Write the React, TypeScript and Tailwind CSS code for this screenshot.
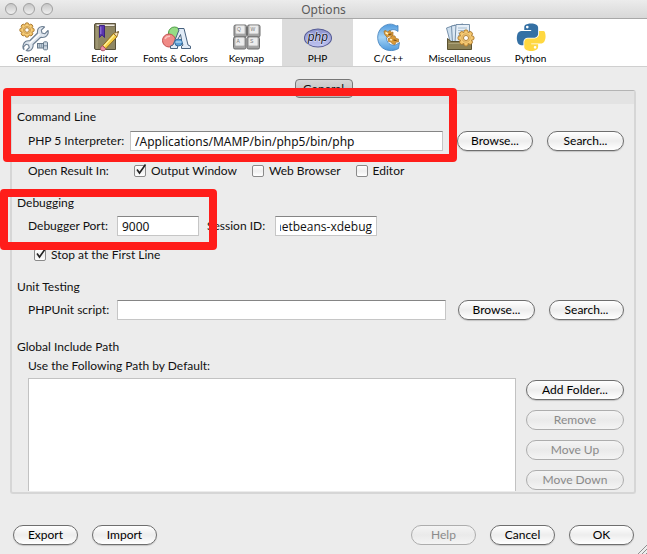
import React, { useState } from "react";
import clsx from "clsx";

const gearTeeth = [0, 45, 90, 135, 180, 225, 270, 315];

function Gear({ cx, cy, r }: { cx: number; cy: number; r: number }) {
  return (
    <g transform={`translate(${cx} ${cy})`}>
      {gearTeeth.map((a) => (
        <circle key={a} r={r * 0.3} cx={0} cy={-r * 0.8} transform={`rotate(${a})`} fill="#f3c46a" stroke="#a8762a" strokeWidth="0.9" />
      ))}
      <circle r={r * 0.78} fill="#f7cf7c" />
      <circle r={r * 0.56} fill="none" stroke="#c08a3a" strokeWidth="0.6" />
      <circle r={r * 0.34} fill="#fff" stroke="#a8762a" strokeWidth="0.9" />
    </g>
  );
}

function GeneralIcon() {
  return (
    <svg viewBox="0 0 30 30" className="size-[30px]" aria-hidden="true">
      <Gear cx={8} cy={8} r={6.6} />
      <path
        d="M5 27.500 C3 26 4 21 6.500 19.500 C8 18.600 10 19 11 18.500 L18.500 11 C18.200 8 19.500 5.500 22 4.800 C23.500 4.300 25 4.500 25.500 5 L22.300 8.200 L23 11 L25.700 11.800 L29 8.500 C29.800 11 28.500 14 26 15 C24 15.800 22.500 15.200 21.500 15.500 L14 22.500 C14.500 25 13 28 10.500 28.700 C9 29 8 29 7.200 28.600 L10.300 25.500 L9.500 23 L7 22.300 L4.500 24.800 Z"
        fill="#dfe6ee" stroke="#6d7f92" strokeWidth="1.100" strokeLinejoin="round"
      />
      <path d="M10.500 21.500 L20.500 12" stroke="#fff" strokeWidth="1.200" />
      <rect x="18.500" y="21.500" width="6.500" height="4.500" fill="#b9c7d4" stroke="#66798b" />
      <path d="M20.500 22 V26 M22.500 22 V26" stroke="#7e90a1" strokeWidth="0.700" />
      <rect x="24.500" y="19.800" width="4" height="8" rx="1" fill="#ccd7e1" stroke="#66798b" />
      <path d="M25 23.800 H28.500" stroke="#66798b" strokeWidth="0.800" />
    </svg>
  );
}

function EditorIcon() {
  return (
    <svg viewBox="0 0 30 30" className="size-[30px]" aria-hidden="true">
      <path d="M4.500 3 Q4.500 1.500 6 1.500 H25.500 V27.500 H6 Q4.500 27.500 4.500 26 Z" fill="#8f8763" stroke="#57503a" />
      <path d="M6 2 H25 V4.500 H7 Q5.500 4 6 2 Z" fill="#eeeade" stroke="#6b6046" strokeWidth="0.800" />
      <path d="M7 5.500 V27" stroke="#aca482" />
      <path d="M9.500 3.500 H14.500 V15.500 L12 12.800 L9.500 15.500 Z" fill="#5a35b0" stroke="#371c7d" strokeWidth="0.900" />
      <path d="M10.800 4.500 V12" stroke="#a48ae0" strokeWidth="0.900" />
      <path d="M12.500 23.800 L23.500 11.500 L27 14.800 L15.800 26.700 Z" fill="#f6cf45" stroke="#8b6518" strokeWidth="0.900" />
      <path d="M14 24 L24.200 13" stroke="#fdf0a0" strokeWidth="1.200" />
      <path d="M23.500 11.500 L28.500 9.500 L27 14.800 Z" fill="#f2dfb8" stroke="#8b6518" strokeWidth="0.800" />
      <path d="M27.200 10 L28.700 9.300 L28.200 11.200 Z" fill="#333" />
      <path d="M12.500 23.800 C10 25 10 28.200 12 28.700 C14 29 15.500 28 15.800 26.700 Z" fill="#ee91a4" stroke="#a04a5c" strokeWidth="0.900" />
    </svg>
  );
}

function FontsIcon() {
  return (
    <svg viewBox="0 0 30 30" className="size-[30px]" aria-hidden="true">
      <circle cx="13.500" cy="11" r="6" fill="#96dc85" stroke="#4c9c43" />
      <circle cx="8" cy="18.500" r="6.500" fill="#f08a86" stroke="#c24f50" />
      <path d="M4 17 Q5.500 14 9 14.200" stroke="#fbc5c0" strokeWidth="1.500" fill="none" />
      <path
        fillRule="evenodd"
        d="M9.500 24 L12 23 L18 8 L17 6.500 H23 L27 23 L29.500 24.200 V26.500 H20.500 V24.200 L22 23.200 L21.300 21 H15.500 L14.800 23 L16.500 24.200 V26.500 H9.500 Z M16.500 18 H20.600 L19.500 12.500 Z"
        fill="#e2ecf7" stroke="#47617e" strokeWidth="1" strokeLinejoin="round"
      />
      <ellipse cx="17.500" cy="20.500" rx="3.800" ry="3.500" fill="#5da0d8" stroke="#2d6597" strokeWidth="0.900" />
      <path d="M14.500 20 H20.500" stroke="#b9dcf4" strokeWidth="1.300" />
    </svg>
  );
}

const keys = [
  { x: 2, y: 3, c: "Q" },
  { x: 15.5, y: 3, c: "W" },
  { x: 1.5, y: 15, c: "A" },
  { x: 15, y: 15, c: "S" },
];

function KeymapIcon() {
  return (
    <svg viewBox="0 0 30 30" className="size-[30px]" aria-hidden="true">
      {keys.map((k) => (
        <g key={k.c}>
          <rect x={k.x} y={k.y} width="12.500" height="12" rx="1.500" fill="#a2a2a2" stroke="#6e6e6e" />
          <rect x={k.x + 1.8} y={k.y + 0.6} width="9" height="8.200" rx="1" fill="#ededed" stroke="#c4c4c4" strokeWidth="0.500" />
          <text x={k.x + 3} y={k.y + 6.2} fontSize="5" fontFamily="Liberation Sans, sans-serif" fill="#777">{k.c}</text>
        </g>
      ))}
    </svg>
  );
}

function PhpIcon() {
  return (
    <svg viewBox="0 0 30 30" className="size-[30px]" aria-hidden="true">
      <defs>
        <linearGradient id="phpFill" x1="0" y1="0" x2="0" y2="1">
          <stop offset="0" stopColor="#8c92cc" />
          <stop offset="1" stopColor="#c0c5f2" />
        </linearGradient>
      </defs>
      <ellipse cx="15" cy="16" rx="13.500" ry="9" fill="url(#phpFill)" stroke="#565c96" strokeWidth="1.100" />
      <text x="14.800" y="18.800" textAnchor="middle" fontSize="12" fontStyle="italic" fontFamily="Liberation Sans, sans-serif" fill="#15151f" stroke="#dfe1fa" strokeWidth="1.200" paintOrder="stroke">php</text>
    </svg>
  );
}

function CppIcon() {
  return (
    <svg viewBox="0 0 30 30" className="size-[30px]" aria-hidden="true">
      <defs>
        <linearGradient id="cFill" x1="0" y1="0" x2="0" y2="1">
          <stop offset="0" stopColor="#4f9ade" />
          <stop offset="0.500" stopColor="#a5d3f5" />
          <stop offset="1" stopColor="#4e9ade" />
        </linearGradient>
      </defs>
      <path
        d="M24 3.500 V9.500 C21 7 17.500 7 15 9.500 C11.500 12.500 11.500 18.500 15 21.500 C18 24 22 23.500 25.500 20.500 L24.500 26.500 C19 29.800 11 29.300 6.500 24 C2 18 3 9.500 8.500 5 C13.500 1.200 19 1.500 22 4 Z"
        fill="url(#cFill)" stroke="#3f7dba" strokeWidth="0.800" strokeLinejoin="round"
      />
      <g fill="#d99a38" stroke="#a8742c" strokeWidth="0.700" strokeLinejoin="round">
        <path d="M10 9 L12 8.500 L13.500 10 L16 8.500 L17.500 10.500 L19 10 L19 13 L17.500 14.500 L15 14 L13.500 15.500 L12 14 L10.500 12 Z" />
        <path d="M14 16.500 L17 15.500 L18 13.500 L21 14 L22 16.500 L24.500 17 L24.500 20 L22 20 L21 22.500 L18.500 22 L17 20 L14.500 19.500 Z" />
      </g>
      <path d="M11.500 10.500 L14 12 M16 17.500 L18 18" stroke="#fff0c4" strokeWidth="1.600" />
      <path d="M14.500 12.500 L17.500 12 M19.500 18 L22.500 18.500" stroke="#6d4310" strokeWidth="1.200" />
    </svg>
  );
}

function MiscIcon() {
  return (
    <svg viewBox="0 0 30 30" className="size-[30px]" aria-hidden="true">
      <path d="M1.500 6 L10 3 L14 20 L6 23 Z" fill="#cfe0ef" stroke="#6b86a2" strokeWidth="0.900" />
      <path d="M6.500 4 L18 2 L20 20 L7.500 21 Z" fill="#dbe8f4" stroke="#6b86a2" strokeWidth="0.900" />
      <path d="M11 2.500 H24.500 V21 H10 Z" fill="#e6eff8" stroke="#6b86a2" strokeWidth="0.900" />
      <path d="M13 6 H22 M13 8.500 H22 M13 11 H18 M13 13.500 H17" stroke="#9db5cb" strokeWidth="0.900" />
      <path d="M2.500 16.500 L6 19.500 H22 L26.500 17.500 V27.500 H2.500 Z" fill="#8d8256" stroke="#5b5231" />
      <path d="M3.500 21.500 H25.500" stroke="#afa57c" strokeWidth="0.900" />
      <Gear cx={21} cy={16} r={7.4} />
    </svg>
  );
}

function PythonIcon() {
  return (
    <svg viewBox="0 0 110 110" className="size-[30px]" aria-hidden="true">
      <g transform="translate(3 3) scale(0.95)">
        <path
          fill="#3470a4"
          d="M54.900 3 C50.300 3 46 3.400 42.100 4.100 C30.800 6.100 28.700 10.300 28.700 18 V28.200 H55.500 V31.600 H18.600 C10.800 31.600 4 36.300 1.900 45.200 C-0.600 55.400 -0.700 61.800 1.900 72.500 C3.800 80.500 8.400 86.100 16.200 86.100 H25.400 V73.900 C25.400 65 33.100 57.200 42.100 57.200 H68.900 C76.300 57.200 82.200 51.100 82.200 43.600 V18 C82.200 10.700 76.100 5.300 68.900 4.100 C64.300 3.300 59.500 3 54.900 3 Z M40.400 11.200 A5.100 5.100 0 1 1 40.400 21.500 A5.100 5.100 0 1 1 40.400 11.200 Z"
        />
        <path
          fill="#ffd840"
          d="M85.600 31.600 V43.500 C85.600 52.700 77.800 60.500 68.900 60.500 H42.100 C34.800 60.500 28.700 66.800 28.700 74.200 V93 C28.700 100.200 35 104.500 42.100 106.600 C50.600 109.100 58.800 109.600 68.900 106.600 C75.600 104.700 82.200 100.800 82.200 93 V82.800 H55.500 V79.400 H95.600 C103.400 79.400 106.300 73.900 109 65.800 C111.800 57.400 111.700 49.400 109 38.600 C107.100 30.800 103.500 31.600 95.600 31.600 Z M70.500 89.500 A5.100 5.100 0 1 1 70.500 99.700 A5.100 5.100 0 1 1 70.500 89.500 Z"
        />
      </g>
    </svg>
  );
}

const categories = [
  { name: "General", Icon: GeneralIcon },
  { name: "Editor", Icon: EditorIcon },
  { name: "Fonts & Colors", Icon: FontsIcon },
  { name: "Keymap", Icon: KeymapIcon },
  { name: "PHP", Icon: PhpIcon },
  { name: "C/C++", Icon: CppIcon },
  { name: "Miscellaneous", Icon: MiscIcon },
  { name: "Python", Icon: PythonIcon },
];

function PushButton({ children, className, disabled }: { children: React.ReactNode; className?: string; disabled?: boolean }) {
  return (
    <button
      type="button"
      disabled={disabled}
      className={clsx(
        "flex h-5 shrink-0 items-center justify-center rounded-full border bg-linear-to-b whitespace-nowrap",
        disabled
          ? "border-[#adadad] from-[#f4f4f4] via-[#eaeaea] to-[#f4f4f4] text-[#8a8a8a]"
          : "border-[#6e6e6e] from-white via-[#ededed] to-white text-black shadow-[0_1px_1px_#c4c4c4]",
        className,
      )}
    >
      {children}
    </button>
  );
}

function CheckBox({ id, label, defaultChecked }: { id: string; label: string; defaultChecked?: boolean }) {
  return (
    <div className="flex h-4 items-center gap-[5px]">
      <span className="relative flex">
        <input
          id={id}
          type="checkbox"
          defaultChecked={defaultChecked}
          className="peer size-3 appearance-none rounded-[2px] border border-[#8a8a8a] bg-linear-to-b from-white via-[#efefef] to-white"
        />
        <svg viewBox="0 0 14 14" className="pointer-events-none absolute -top-0.5 left-0 hidden size-3.5 peer-checked:block" aria-hidden="true">
          <path d="M3 6.500 L5.500 10 L11.500 1.500" fill="none" stroke="#222" strokeWidth="1.600" />
        </svg>
      </span>
      <label htmlFor={id}>{label}</label>
    </div>
  );
}

const field = "h-5 min-w-0 border border-[#c6c6c6] border-t-[#858585] bg-white px-1 outline-none";

export default function App() {
  const [active, setActive] = useState("PHP");
  return (
    <main className="flex min-h-screen flex-col bg-[#ececec] font-['Lato',sans-serif] text-[12px] leading-4 text-[#111]">
      <header className="relative flex h-[19px] items-center justify-center border-b border-[#a8a8a8] bg-linear-to-b from-[#ececec] to-[#d8d8d8]">
        <div className="absolute left-[5px] flex gap-1.5">
          {["Close", "Minimize", "Zoom"].map((n) => (
            <button key={n} type="button" aria-label={n} className="size-3 rounded-full border border-[#a0a0a0] bg-linear-to-b from-[#c6c6c6] to-[#f0f0f0]" />
          ))}
        </div>
        <h1 className="pt-0.5 font-['Noto_Sans',sans-serif] text-[#5a5a5a]">Options</h1>
      </header>

      <nav className="flex h-12 border-b border-[#cfcfcf] bg-white text-[10px] leading-3 text-black">
        {categories.map(({ name, Icon }) => (
          <button
            key={name}
            type="button"
            onClick={() => setActive(name)}
            className={clsx("-ml-0.5 mr-0.5 flex w-[71px] flex-col items-center pt-[3px] whitespace-nowrap", active === name && "bg-[#dcdcdc]")}
          >
            <Icon />
            {name}
          </button>
        ))}
      </nav>

      <div className="relative flex flex-col px-[10px] pt-3">
        <button type="button" className="relative z-10 flex h-[19px] w-[58px] items-center justify-center self-center rounded-[4px] border border-[#777] bg-linear-to-b from-[#d6d6d6] to-[#b9b9b9]">
          General
        </button>
        <section className="-mt-2 mr-px flex flex-col rounded-[3px] border-2 border-t border-[#d6d6d6] border-t-[#b4b4b4]">
          <div className="h-[13px] bg-[#e3e3e3]" />
          <div className="flex flex-col pt-[5px] pr-2.5 pb-px pl-[5px]">
            <h2>Command Line</h2>
            <div className="mt-1.5 flex items-center pl-[11px]">
              <label htmlFor="interpreter" className="w-[102px] whitespace-nowrap">PHP 5 Interpreter:</label>
              <input id="interpreter" defaultValue="/Applications/MAMP/bin/php5/bin/php" className={clsx(field, "flex-1 font-['Noto_Sans',sans-serif]")} />
              <PushButton className="ml-3.5 w-[76px]">Browse...</PushButton>
              <PushButton className="ml-3.5 w-[77px]">Search...</PushButton>
            </div>
            <div className="mt-3 flex items-center pl-[11px]">
              <span className="w-[106px]">Open Result In:</span>
              <div className="flex gap-[15px]">
                <CheckBox id="out" label="Output Window" defaultChecked />
                <CheckBox id="web" label="Web Browser" />
                <CheckBox id="ed" label="Editor" />
              </div>
            </div>

            <h2 className="mt-4">Debugging</h2>
            <div className="mt-[5px] flex items-center pl-[11px]">
              <label htmlFor="port" className="w-[89px]">Debugger Port:</label>
              <input id="port" defaultValue="9000" className={clsx(field, "w-[82px] font-['Noto_Sans',sans-serif]")} />
              <label htmlFor="session" className="ml-2 w-[68px] whitespace-nowrap">Session ID:</label>
              <input id="session" defaultValue="netbeans-xdebug" className={clsx(field, "w-[102px] font-['Open_Sans',sans-serif] [direction:rtl]")} />
            </div>
            <div className="mt-[11px] pl-[17px]">
              <CheckBox id="stop" label="Stop at the First Line" defaultChecked />
            </div>

            <h2 className="mt-4">Unit Testing</h2>
            <div className="mt-[5px] flex items-center pl-[11px]">
              <label htmlFor="phpunit" className="w-[89px] whitespace-nowrap">PHPUnit script:</label>
              <input id="phpunit" className={clsx(field, "flex-1")} />
              <PushButton className="ml-3 w-[77px]">Browse...</PushButton>
              <PushButton className="ml-3.5 w-[75px]">Search...</PushButton>
            </div>

            <h2 className="mt-[19px]">Global Include Path</h2>
            <label htmlFor="paths" className="mt-[3px] pl-[11px]">Use the Following Path by Default:</label>
            <div className="mt-1 flex gap-2.5 pl-[11px]">
              <select id="paths" multiple size={6} className="h-[113px] min-w-0 flex-1 appearance-none border border-b-0 border-[#c2c2c2] bg-white bg-none outline-none" />
              <div className="flex w-[98px] flex-col gap-2.5 pt-0.5">
                <PushButton>Add Folder...</PushButton>
                <PushButton disabled>Remove</PushButton>
                <PushButton disabled>Move Up</PushButton>
                <PushButton disabled>Move Down</PushButton>
              </div>
            </div>
          </div>
        </section>
        <div aria-hidden="true" className="pointer-events-none absolute top-[21px] right-[190px] left-[3px] z-20 h-[74px] rounded-[4px] border-8 border-[#ff1d1a]" />
        <div aria-hidden="true" className="pointer-events-none absolute top-[122px] left-0 z-20 h-[61px] w-[217px] rounded-[4px] border-8 border-[#ff1d1a]" />
      </div>

      <footer className="relative flex px-[13px] pt-[31px] pb-2.5">
        <div className="flex flex-1 gap-3.5">
          <PushButton className="w-[65px]">Export</PushButton>
          <PushButton className="w-[65px]">Import</PushButton>
        </div>
        <div className="flex gap-3.5">
          <PushButton disabled className="w-[65px]">Help</PushButton>
          <PushButton className="w-[65px]">Cancel</PushButton>
          <PushButton className="w-[65px]">OK</PushButton>
        </div>
        <svg viewBox="0 0 10 10" className="absolute right-0 bottom-0 size-2.5" aria-hidden="true">
          <path d="M0 10 L10 0 M4 10 L10 4 M8 10 L10 8" stroke="#8f8f8f" fill="none" />
        </svg>
      </footer>
    </main>
  );
}
